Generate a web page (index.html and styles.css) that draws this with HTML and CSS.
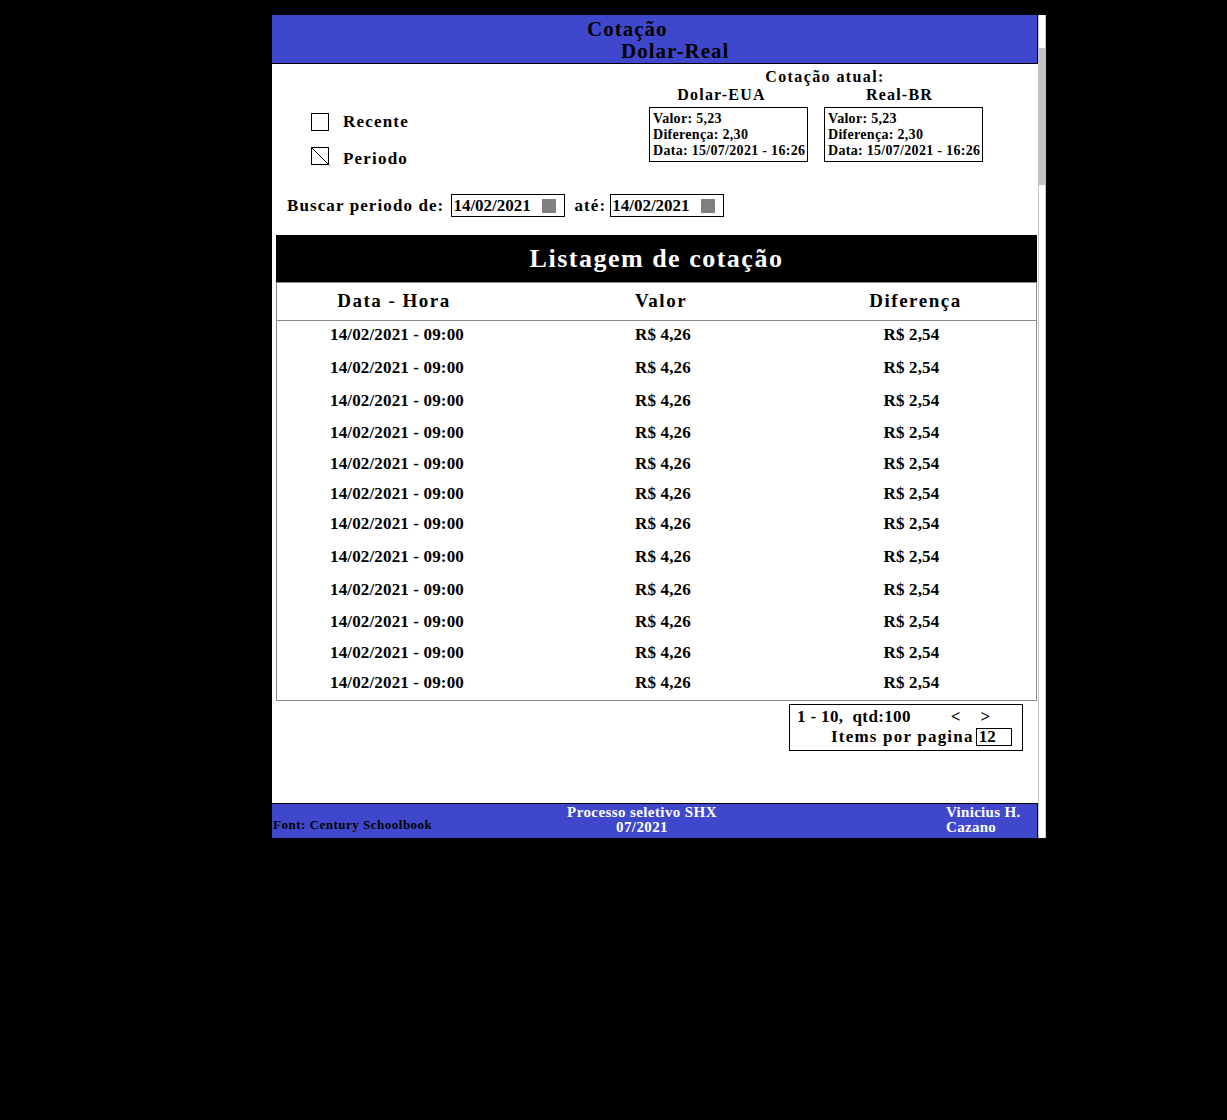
FILE: index.html
```html
<!DOCTYPE html>
<html lang="pt-BR">
<head>
<meta charset="utf-8">
<title>Cotação Dolar-Real</title>
<link rel="stylesheet" href="styles.css">
</head>
<body>
<div class="window">
  <div class="main">
    <header class="topbar">
      <div class="t1">Cotação</div>
      <div class="t2">Dolar-Real</div>
    </header>

    <section class="top">
      <div class="options">
        <div class="opt"><span class="chk"></span><span class="opt-label">Recente</span></div>
        <div class="opt opt-2">
          <svg class="chk-x" width="18" height="18" viewBox="0 0 18 18"><rect x="0.5" y="0.5" width="17" height="17" fill="#fff" stroke="#000" stroke-width="1"/><line x1="0" y1="0" x2="18.5" y2="18.5" stroke="#000" stroke-width="1"/></svg>
          <span class="opt-label">Periodo</span>
        </div>
      </div>
      <div class="current">
        <div class="cur-title">Cotação atual:</div>
        <div class="cur-cols">
          <div class="cur-col">
            <div class="cur-label">Dolar-EUA</div>
            <div class="cur-box">Valor: 5,23<br>Diferença: 2,30<br>Data: 15/07/2021 - 16:26</div>
          </div>
          <div class="cur-col">
            <div class="cur-label cur-label-2">Real-BR</div>
            <div class="cur-box">Valor: 5,23<br>Diferença: 2,30<br>Data: 15/07/2021 - 16:26</div>
          </div>
        </div>
      </div>
    </section>

    <div class="search">
      <span class="s-label">Buscar periodo de:</span>
      <div class="date"><span>14/02/2021</span><span class="sq"></span></div>
      <span class="s-label s-ate">até:</span>
      <div class="date"><span>14/02/2021</span><span class="sq"></span></div>
    </div>

    <div class="table">
      <div class="t-title">Listagem de cotação</div>
      <div class="t-head"><div>Data - Hora</div><div>Valor</div><div class="c3">Diferença</div></div>
      <div class="t-body">
        <div class="t-row"><div>14/02/2021 - 09:00</div><div>R$ 4,26</div><div class="c3">R$ 2,54</div></div>
        <div class="t-row"><div>14/02/2021 - 09:00</div><div>R$ 4,26</div><div class="c3">R$ 2,54</div></div>
        <div class="t-row"><div>14/02/2021 - 09:00</div><div>R$ 4,26</div><div class="c3">R$ 2,54</div></div>
        <div class="t-row"><div>14/02/2021 - 09:00</div><div>R$ 4,26</div><div class="c3">R$ 2,54</div></div>
        <div class="t-row"><div>14/02/2021 - 09:00</div><div>R$ 4,26</div><div class="c3">R$ 2,54</div></div>
        <div class="t-row"><div>14/02/2021 - 09:00</div><div>R$ 4,26</div><div class="c3">R$ 2,54</div></div>
        <div class="t-row"><div>14/02/2021 - 09:00</div><div>R$ 4,26</div><div class="c3">R$ 2,54</div></div>
        <div class="t-row"><div>14/02/2021 - 09:00</div><div>R$ 4,26</div><div class="c3">R$ 2,54</div></div>
        <div class="t-row"><div>14/02/2021 - 09:00</div><div>R$ 4,26</div><div class="c3">R$ 2,54</div></div>
        <div class="t-row"><div>14/02/2021 - 09:00</div><div>R$ 4,26</div><div class="c3">R$ 2,54</div></div>
        <div class="t-row"><div>14/02/2021 - 09:00</div><div>R$ 4,26</div><div class="c3">R$ 2,54</div></div>
        <div class="t-row"><div>14/02/2021 - 09:00</div><div>R$ 4,26</div><div class="c3">R$ 2,54</div></div>
      </div>
    </div>

    <div class="pager">
      <div class="pg-line1"><span class="pg-count">1 - 10,&nbsp; qtd:100</span><span class="arrow prev">&lt;</span><span class="arrow next">&gt;</span></div>
      <div class="pg-line2"><span class="pg-label">Items por pagina</span><span class="pg-input">12</span></div>
    </div>

    <footer class="footer">
      <div class="f-left">Font: Century Schoolbook</div>
      <div class="f-center">Processo seletivo SHX<br>07/2021</div>
      <div class="f-right">Vinicius H.<br>Cazano</div>
    </footer>
  </div>
  <div class="scrollbar"><div class="thumb"></div></div>
</div>
</body>
</html>
```

FILE: styles.css
```css
html, body {
  margin: 0;
  padding: 0;
  background: #000;
}

.window {
  margin: 15px 0 0 272px;
  width: 774px;
  height: 823px;
  display: flex;
  background: #fff;
  font-family: "Liberation Serif", "Times New Roman", serif;
  font-weight: 700;
  color: #000;
}

.main {
  width: 766px;
  display: flex;
  flex-direction: column;
}

/* header */
.topbar {
  height: 49px;
  box-sizing: border-box;
  background: #3f48cc;
  border-bottom: 1px solid #000;
  border-right: 1px solid #000;
  padding-top: 3px;
  font-size: 21px;
  line-height: 22px;
  letter-spacing: 1px;
}
.t1 { padding-left: 315px; }
.t2 { padding-left: 349px; }

/* top section */
.top {
  display: flex;
  align-items: flex-start;
}
.options {
  width: 377px;
  box-sizing: border-box;
  padding: 49px 0 0 39px;
}
.opt {
  display: flex;
  align-items: center;
  gap: 14px;
  height: 18px;
  font-size: 17px;
  line-height: 18px;
  letter-spacing: 1.2px;
}
.opt-2 {
  margin-top: 15px;
  height: 19px;
}
.opt-2 .opt-label { padding-top: 6px; }
.chk {
  width: 18px;
  height: 18px;
  box-sizing: border-box;
  border: 1px solid #000;
}
.chk-x {
  display: block;
  overflow: visible;
}

.current {
  padding-top: 4px;
}
.cur-title {
  padding-left: 18px;
  text-align: center;
  font-size: 16px;
  line-height: 18px;
  letter-spacing: 1.4px;
}
.cur-cols {
  display: grid;
  grid-template-columns: 159px 159px;
  column-gap: 16px;
}
.cur-label {
  padding-right: 14px;
  text-align: center;
  font-size: 16px;
  line-height: 18px;
  letter-spacing: 1.2px;
  margin-bottom: 3px;
}
.cur-label-2 { padding-right: 8px; }
.cur-box {
  height: 55px;
  box-sizing: border-box;
  border: 1px solid #000;
  padding: 3px 0 0 3px;
  font-size: 14px;
  line-height: 16px;
  letter-spacing: 0.3px;
  white-space: nowrap;
}

/* search */
.search {
  margin-top: 29px;
  padding-left: 15px;
  height: 23px;
  display: flex;
  align-items: center;
  font-size: 17px;
  line-height: 23px;
}
.s-label {
  letter-spacing: 1.1px;
  margin-right: 7px;
}
.s-ate {
  margin-left: 9px;
  margin-right: 4px;
}
.date {
  width: 114px;
  height: 23px;
  box-sizing: border-box;
  border: 1px solid #000;
  display: flex;
  align-items: center;
  justify-content: space-between;
  padding: 0 8px 0 1px;
  line-height: 21px;
}
.sq {
  width: 14px;
  height: 14px;
  background: #808080;
}

/* table */
.table {
  margin: 18px 0 0 4px;
  width: 761px;
}
.t-title {
  height: 47px;
  background: #000;
  color: #fff;
  text-align: center;
  font-size: 26px;
  line-height: 47px;
  letter-spacing: 1.5px;
}
.t-head {
  display: grid;
  grid-template-columns: 240px 288px 1fr;
  height: 39px;
  box-sizing: border-box;
  border: 1px solid #8a8a8a;
  padding-bottom: 2px;
  font-size: 19px;
  line-height: 35px;
  letter-spacing: 1.5px;
  text-align: center;
}
.t-head > div:first-child { padding-right: 6px; }
.t-head .c3 { padding-right: 10px; }
.t-body {
  border: 1px solid #8a8a8a;
  border-top: 0;
}
.t-row {
  display: grid;
  grid-template-columns: 240px 288px 1fr;
  height: 33px;
  font-size: 17px;
  line-height: 28px;
  letter-spacing: 0.15px;
  text-align: center;
}
.t-row:nth-child(6n+3) { height: 32px; }
.t-row:nth-child(6n+4) { height: 31px; }
.t-row:nth-child(6n+5),
.t-row:nth-child(6n) { height: 30px; }
.t-row:last-child { height: 31px; }
.t-row > div:nth-child(2) { padding-left: 4px; }
.t-row .c3 { padding-right: 18px; }

/* pager */
.pager {
  margin: 3px 0 0 517px;
  width: 234px;
  height: 47px;
  box-sizing: border-box;
  border: 1px solid #000;
  padding: 2px 0 0 7px;
  font-size: 17px;
  line-height: 20px;
}
.pg-line1 {
  display: flex;
  height: 20px;
}
.pg-count { letter-spacing: 0.35px; }
.prev { margin-left: 40px; }
.next { margin-left: 20px; }
.pg-line2 {
  display: flex;
  align-items: center;
  height: 20px;
  padding-left: 34px;
}
.pg-label {
  letter-spacing: 1.2px;
}
.pg-input {
  margin-left: 2px;
  width: 36px;
  height: 18px;
  box-sizing: border-box;
  border: 1px solid #000;
  padding-left: 2px;
  line-height: 16px;
}

/* footer */
.footer {
  margin-top: auto;
  height: 35px;
  box-sizing: border-box;
  border-top: 1px solid #000;
  border-right: 1px solid #000;
  background: #3f48cc;
  display: flex;
}
.f-left {
  width: 240px;
  box-sizing: border-box;
  padding: 13px 0 0 1px;
  font-size: 13px;
  line-height: 15px;
  letter-spacing: 0.5px;
  white-space: nowrap;
}
.f-center {
  width: 260px;
  padding-top: 1px;
  text-align: center;
  color: #fff;
  font-size: 15px;
  line-height: 15px;
  letter-spacing: 0.4px;
}
.f-right {
  margin-left: auto;
  width: 91px;
  padding-top: 1px;
  color: #fff;
  font-size: 15px;
  line-height: 15px;
  letter-spacing: 0.3px;
  white-space: nowrap;
}

/* scrollbar */
.scrollbar {
  width: 8px;
  box-sizing: border-box;
  border-left: 1px solid #c8c8c8;
  border-right: 1px solid #c8c8c8;
  padding-top: 33px;
  background: #fff;
}
.thumb {
  margin: 0 -1px;
  height: 137px;
  background: #c3c3c3;
}
```
